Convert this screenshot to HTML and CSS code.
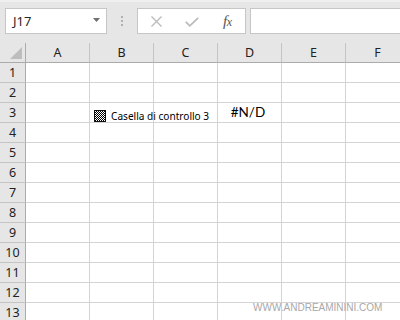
FILE: index.html
```html
<!DOCTYPE html>
<html>
<head>
<meta charset="utf-8">
<link rel="stylesheet" href="styles.css">
</head>
<body>
<div class="toolbar">
  <div class="namebox">
    <span class="nameval">J17</span>
    <svg class="caret" width="7" height="4" viewBox="0 0 7 4"><path d="M0 0H7L3.5 4Z" fill="#6f6f6f"/></svg>
  </div>
  <div class="dots"><i></i><i></i><i></i></div>
  <div class="fxbtns">
    <svg class="ico-x" width="11" height="11" viewBox="0 0 11 11"><path d="M0.5 0.5L10.5 10.5M10.5 0.5L0.5 10.5" stroke="#bcbcbc" stroke-width="1.4" fill="none"/></svg>
    <svg class="ico-ok" width="14" height="10" viewBox="0 0 14 10"><path d="M0.8 4.8L4.8 8.8L13.2 0.8" stroke="#bcbcbc" stroke-width="1.8" fill="none"/></svg>
    <span class="fx">f<span class="fxx">x</span></span>
  </div>
  <div class="formula"></div>
</div>
<div class="sheet">
  <div class="corner"><svg width="12" height="12" viewBox="0 0 12 12"><path d="M12 0V12H0Z" fill="#bdbdbd"/></svg></div>
  <div class="ch">A</div><div class="ch">B</div><div class="ch">C</div><div class="ch">D</div><div class="ch">E</div><div class="ch">F</div>

  <div class="rh">1</div><div class="c"></div><div class="c"></div><div class="c"></div><div class="c"></div><div class="c"></div><div class="c"></div>
  <div class="rh">2</div><div class="c"></div><div class="c"></div><div class="c"></div><div class="c"></div><div class="c"></div><div class="c"></div>
  <div class="rh">3</div><div class="c"></div><div class="c"></div><div class="c"></div><div class="c err">#N/D</div><div class="c"></div><div class="c"></div>
  <div class="rh">4</div><div class="c"></div><div class="c"></div><div class="c"></div><div class="c"></div><div class="c"></div><div class="c"></div>
  <div class="rh">5</div><div class="c"></div><div class="c"></div><div class="c"></div><div class="c"></div><div class="c"></div><div class="c"></div>
  <div class="rh">6</div><div class="c"></div><div class="c"></div><div class="c"></div><div class="c"></div><div class="c"></div><div class="c"></div>
  <div class="rh">7</div><div class="c"></div><div class="c"></div><div class="c"></div><div class="c"></div><div class="c"></div><div class="c"></div>
  <div class="rh">8</div><div class="c"></div><div class="c"></div><div class="c"></div><div class="c"></div><div class="c"></div><div class="c"></div>
  <div class="rh">9</div><div class="c"></div><div class="c"></div><div class="c"></div><div class="c"></div><div class="c"></div><div class="c"></div>
  <div class="rh">10</div><div class="c"></div><div class="c"></div><div class="c"></div><div class="c"></div><div class="c"></div><div class="c"></div>
  <div class="rh">11</div><div class="c"></div><div class="c"></div><div class="c"></div><div class="c"></div><div class="c"></div><div class="c"></div>
  <div class="rh">12</div><div class="c"></div><div class="c"></div><div class="c"></div><div class="c"></div><div class="c"></div><div class="c"></div>
  <div class="rh">13</div><div class="c"></div><div class="c"></div><div class="c"></div><div class="c"></div><div class="c"></div><div class="c"></div>

  <div class="checkctl"><span class="cbox"></span><span class="clabel">Casella di controllo 3</span></div>
</div>
<div class="watermark">WWW.ANDREAMININI.COM</div>
</body>
</html>
```
FILE: styles.css
```css
html, body {
  margin: 0;
  padding: 0;
  width: 400px;
  height: 320px;
  overflow: hidden;
  background: #e6e6e6;
  font-family: "Noto Sans", "Open Sans", sans-serif;
  position: relative;
}
.toolbar {
  height: 43px;
  box-sizing: border-box;
  padding: 6px 0 0 5px;
  display: flex;
  align-items: flex-start;
  border-top: 2px solid #efefef;
}
.namebox {
  width: 102px;
  height: 26px;
  box-sizing: border-box;
  background: #fff;
  border: 1px solid #c6c6c6;
  display: flex;
  align-items: center;
  justify-content: space-between;
  padding: 0 6px 0 7px;
}
.nameval {
  font-size: 13px;
  color: #262626;
}
.caret { margin-top: -2px; }
.dots {
  margin-left: 14px;
  width: 2px;
  display: flex;
  flex-direction: column;
  gap: 2px;
  padding-top: 8px;
}
.dots i {
  display: block;
  width: 2px;
  height: 2px;
  background: #b0b0b0;
}
.fxbtns {
  margin-left: 14px;
  width: 109px;
  height: 26px;
  box-sizing: border-box;
  background: #fff;
  border: 1px solid #c6c6c6;
  display: flex;
  align-items: center;
  padding-left: 13px;
}
.ico-x { margin-top: 1px; }
.ico-ok { margin-left: 23px; margin-top: 2px; }
.fx {
  margin-left: 24px;
  font-family: "Liberation Serif", serif;
  font-style: italic;
  font-size: 15px;
  color: #555;
  letter-spacing: -0.5px;
}
.fxx { font-size: 12px; }
.formula {
  margin-left: 4px;
  flex: 1;
  height: 26px;
  box-sizing: border-box;
  background: #fff;
  border: 1px solid #c6c6c6;
  margin-right: -10px;
}
.sheet {
  position: relative;
  display: grid;
  grid-template-columns: 26px repeat(6, 64px);
  grid-auto-rows: 20px;
  width: 410px;
}
.corner, .ch, .rh, .c {
  box-sizing: border-box;
}
.corner {
  border-right: 1px solid #ababab;
  border-bottom: 1px solid #ababab;
  display: flex;
  align-items: flex-end;
  justify-content: flex-end;
  padding: 0 3px 3px 0;
}
.ch {
  background: #e6e6e6;
  border-right: 1px solid #c4c4c4;
  border-bottom: 1px solid #ababab;
  display: flex;
  align-items: center;
  justify-content: center;
  font-size: 12.5px;
  color: #222;
}
.rh {
  background: #e6e6e6;
  border-right: 1px solid #ababab;
  border-bottom: 1px solid #c4c4c4;
  display: flex;
  align-items: center;
  justify-content: center;
  font-size: 12.5px;
  color: #222;
}
.c {
  background: #fff;
  border-right: 1px solid #d4d4d4;
  border-bottom: 1px solid #d4d4d4;
}
.err {
  font-family: "Lato", "Liberation Sans", sans-serif;
  font-size: 13.5px;
  color: #000;
  text-align: center;
  line-height: 19px;
  padding-right: 3px;
}
.checkctl {
  position: absolute;
  left: 94px;
  top: 66px;
  display: flex;
  align-items: center;
  gap: 5px;
}
.cbox {
  width: 12px;
  height: 12px;
  box-sizing: border-box;
  border: 1px solid #111;
  background: repeating-conic-gradient(#000 0 25%, #fff 0 50%) 0 0 / 2px 2px;
}
.clabel {
  font-family: "Noto Sans", sans-serif;
  font-size: 10.1px;
  color: #000;
}
.watermark {
  position: absolute;
  left: 253px;
  top: 302px;
  font-family: "Liberation Sans", Arial, sans-serif;
  font-size: 10px;
  color: #a8a8a8;
}
```
